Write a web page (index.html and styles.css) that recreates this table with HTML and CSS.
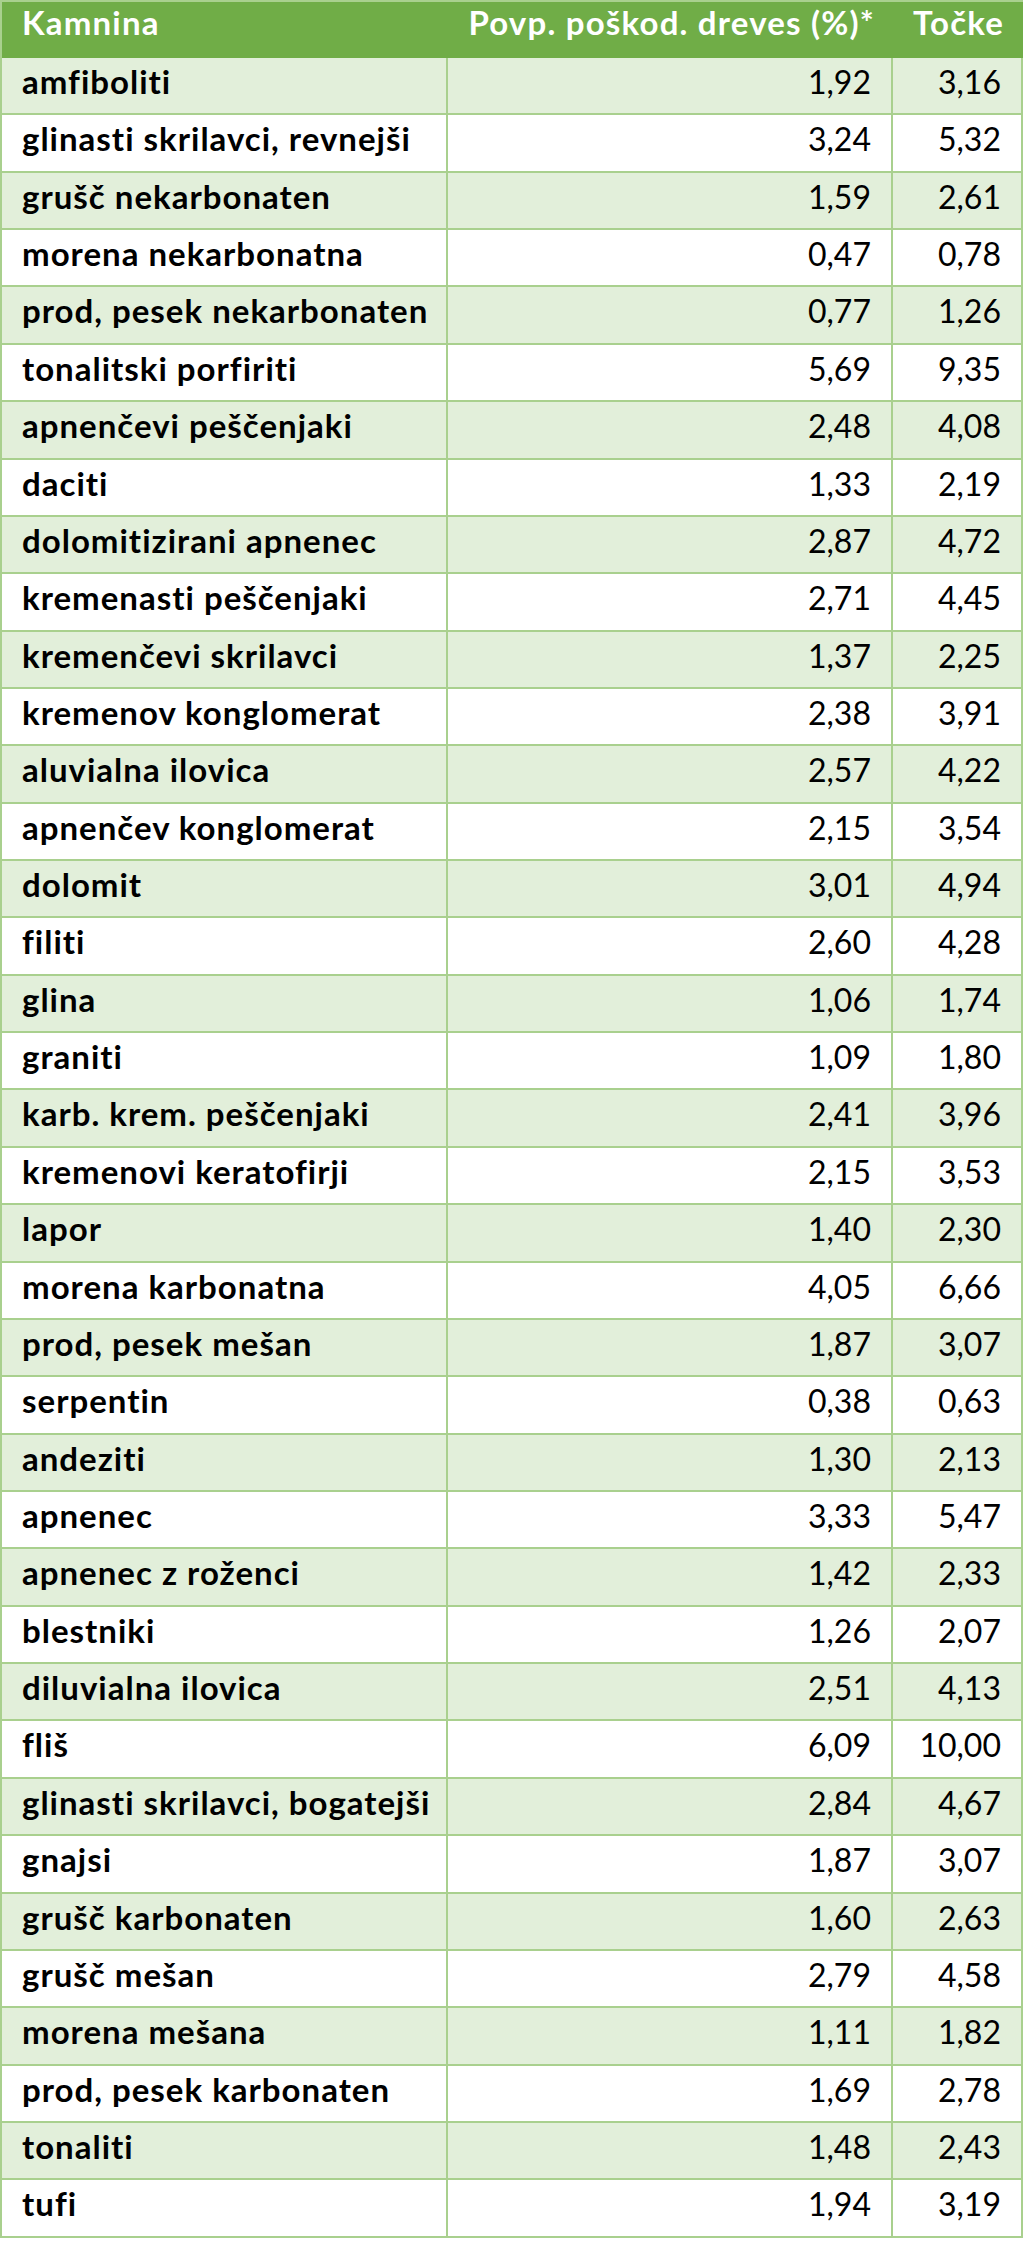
FILE: index.html
```html
<!DOCTYPE html>
<html lang="sl">
<head>
<meta charset="utf-8">
<title>Kamnina</title>
<link rel="stylesheet" href="styles.css">
</head>
<body>
<table class="rock-table">
  <thead>
    <tr>
      <th class="col-name">Kamnina</th>
      <th class="col-num">Povp. poškod. dreves (%)*</th>
      <th class="col-num col-last">Točke</th>
    </tr>
  </thead>
  <tbody>
    <tr><td class="col-name">amfiboliti</td><td class="col-num">1,92</td><td class="col-num col-last">3,16</td></tr>
    <tr><td class="col-name">glinasti skrilavci, revnejši</td><td class="col-num">3,24</td><td class="col-num col-last">5,32</td></tr>
    <tr><td class="col-name">grušč nekarbonaten</td><td class="col-num">1,59</td><td class="col-num col-last">2,61</td></tr>
    <tr><td class="col-name">morena nekarbonatna</td><td class="col-num">0,47</td><td class="col-num col-last">0,78</td></tr>
    <tr><td class="col-name">prod, pesek nekarbonaten</td><td class="col-num">0,77</td><td class="col-num col-last">1,26</td></tr>
    <tr><td class="col-name">tonalitski porfiriti</td><td class="col-num">5,69</td><td class="col-num col-last">9,35</td></tr>
    <tr><td class="col-name">apnenčevi peščenjaki</td><td class="col-num">2,48</td><td class="col-num col-last">4,08</td></tr>
    <tr><td class="col-name">daciti</td><td class="col-num">1,33</td><td class="col-num col-last">2,19</td></tr>
    <tr><td class="col-name">dolomitizirani apnenec</td><td class="col-num">2,87</td><td class="col-num col-last">4,72</td></tr>
    <tr><td class="col-name">kremenasti peščenjaki</td><td class="col-num">2,71</td><td class="col-num col-last">4,45</td></tr>
    <tr><td class="col-name">kremenčevi skrilavci</td><td class="col-num">1,37</td><td class="col-num col-last">2,25</td></tr>
    <tr><td class="col-name">kremenov konglomerat</td><td class="col-num">2,38</td><td class="col-num col-last">3,91</td></tr>
    <tr><td class="col-name">aluvialna ilovica</td><td class="col-num">2,57</td><td class="col-num col-last">4,22</td></tr>
    <tr><td class="col-name">apnenčev konglomerat</td><td class="col-num">2,15</td><td class="col-num col-last">3,54</td></tr>
    <tr><td class="col-name">dolomit</td><td class="col-num">3,01</td><td class="col-num col-last">4,94</td></tr>
    <tr><td class="col-name">filiti</td><td class="col-num">2,60</td><td class="col-num col-last">4,28</td></tr>
    <tr><td class="col-name">glina</td><td class="col-num">1,06</td><td class="col-num col-last">1,74</td></tr>
    <tr><td class="col-name">graniti</td><td class="col-num">1,09</td><td class="col-num col-last">1,80</td></tr>
    <tr><td class="col-name">karb. krem. peščenjaki</td><td class="col-num">2,41</td><td class="col-num col-last">3,96</td></tr>
    <tr><td class="col-name">kremenovi keratofirji</td><td class="col-num">2,15</td><td class="col-num col-last">3,53</td></tr>
    <tr><td class="col-name">lapor</td><td class="col-num">1,40</td><td class="col-num col-last">2,30</td></tr>
    <tr><td class="col-name">morena karbonatna</td><td class="col-num">4,05</td><td class="col-num col-last">6,66</td></tr>
    <tr><td class="col-name">prod, pesek mešan</td><td class="col-num">1,87</td><td class="col-num col-last">3,07</td></tr>
    <tr><td class="col-name">serpentin</td><td class="col-num">0,38</td><td class="col-num col-last">0,63</td></tr>
    <tr><td class="col-name">andeziti</td><td class="col-num">1,30</td><td class="col-num col-last">2,13</td></tr>
    <tr><td class="col-name">apnenec</td><td class="col-num">3,33</td><td class="col-num col-last">5,47</td></tr>
    <tr><td class="col-name">apnenec z roženci</td><td class="col-num">1,42</td><td class="col-num col-last">2,33</td></tr>
    <tr><td class="col-name">blestniki</td><td class="col-num">1,26</td><td class="col-num col-last">2,07</td></tr>
    <tr><td class="col-name">diluvialna ilovica</td><td class="col-num">2,51</td><td class="col-num col-last">4,13</td></tr>
    <tr><td class="col-name">fliš</td><td class="col-num">6,09</td><td class="col-num col-last">10,00</td></tr>
    <tr><td class="col-name">glinasti skrilavci, bogatejši</td><td class="col-num">2,84</td><td class="col-num col-last">4,67</td></tr>
    <tr><td class="col-name">gnajsi</td><td class="col-num">1,87</td><td class="col-num col-last">3,07</td></tr>
    <tr><td class="col-name">grušč karbonaten</td><td class="col-num">1,60</td><td class="col-num col-last">2,63</td></tr>
    <tr><td class="col-name">grušč mešan</td><td class="col-num">2,79</td><td class="col-num col-last">4,58</td></tr>
    <tr><td class="col-name">morena mešana</td><td class="col-num">1,11</td><td class="col-num col-last">1,82</td></tr>
    <tr><td class="col-name">prod, pesek karbonaten</td><td class="col-num">1,69</td><td class="col-num col-last">2,78</td></tr>
    <tr><td class="col-name">tonaliti</td><td class="col-num">1,48</td><td class="col-num col-last">2,43</td></tr>
    <tr><td class="col-name">tufi</td><td class="col-num">1,94</td><td class="col-num col-last">3,19</td></tr>
  </tbody>
</table>
</body>
</html>
```

FILE: styles.css
```css
html, body {
  margin: 0;
  padding: 0;
  background: #ffffff;
}

.rock-table {
  width: 1023px;
  border-collapse: separate;
  border-spacing: 0;
  table-layout: fixed;
  font-family: "Lato", "Open Sans", sans-serif;
  font-size: 32px;
  line-height: 1.2;
  color: #000000;
  border-left: 2px solid #a9d08e;
  border-top: 2px solid #a9d08e;
}

.rock-table th,
.rock-table td {
  box-sizing: border-box;
  vertical-align: top;
  white-space: nowrap;
  overflow: hidden;
}

.rock-table th {
  background: #70ad47;
  color: #ffffff;
  font-weight: 700;
  font-size: 33px;
  letter-spacing: 1.2px;
  height: 56px;
  padding: 1px 18px 0 20px;
  border-right: 0;
}

.rock-table th.col-last {
  border-right: 2px solid #70ad47;
}

.rock-table td {
  height: 57.37px;
  padding: 5px 20px 0 20px;
  border-bottom: 2px solid #a9d08e;
  border-right: 2px solid #a9d08e;
}

.rock-table td.col-name {
  font-size: 33px;
  letter-spacing: 1px;
  padding-top: 4px;
}

.rock-table tbody tr:nth-child(odd) td {
  background: #e2efda;
}

.rock-table tbody tr:nth-child(even) td {
  background: #ffffff;
}

.col-name {
  width: 446px;
  text-align: left;
  font-weight: 700;
}

.col-num {
  text-align: right;
  font-weight: 400;
}

.rock-table th:nth-child(2),
.rock-table td:nth-child(2) {
  width: 445px;
}

.rock-table th:nth-child(3),
.rock-table td:nth-child(3) {
  width: 130px;
}
```
